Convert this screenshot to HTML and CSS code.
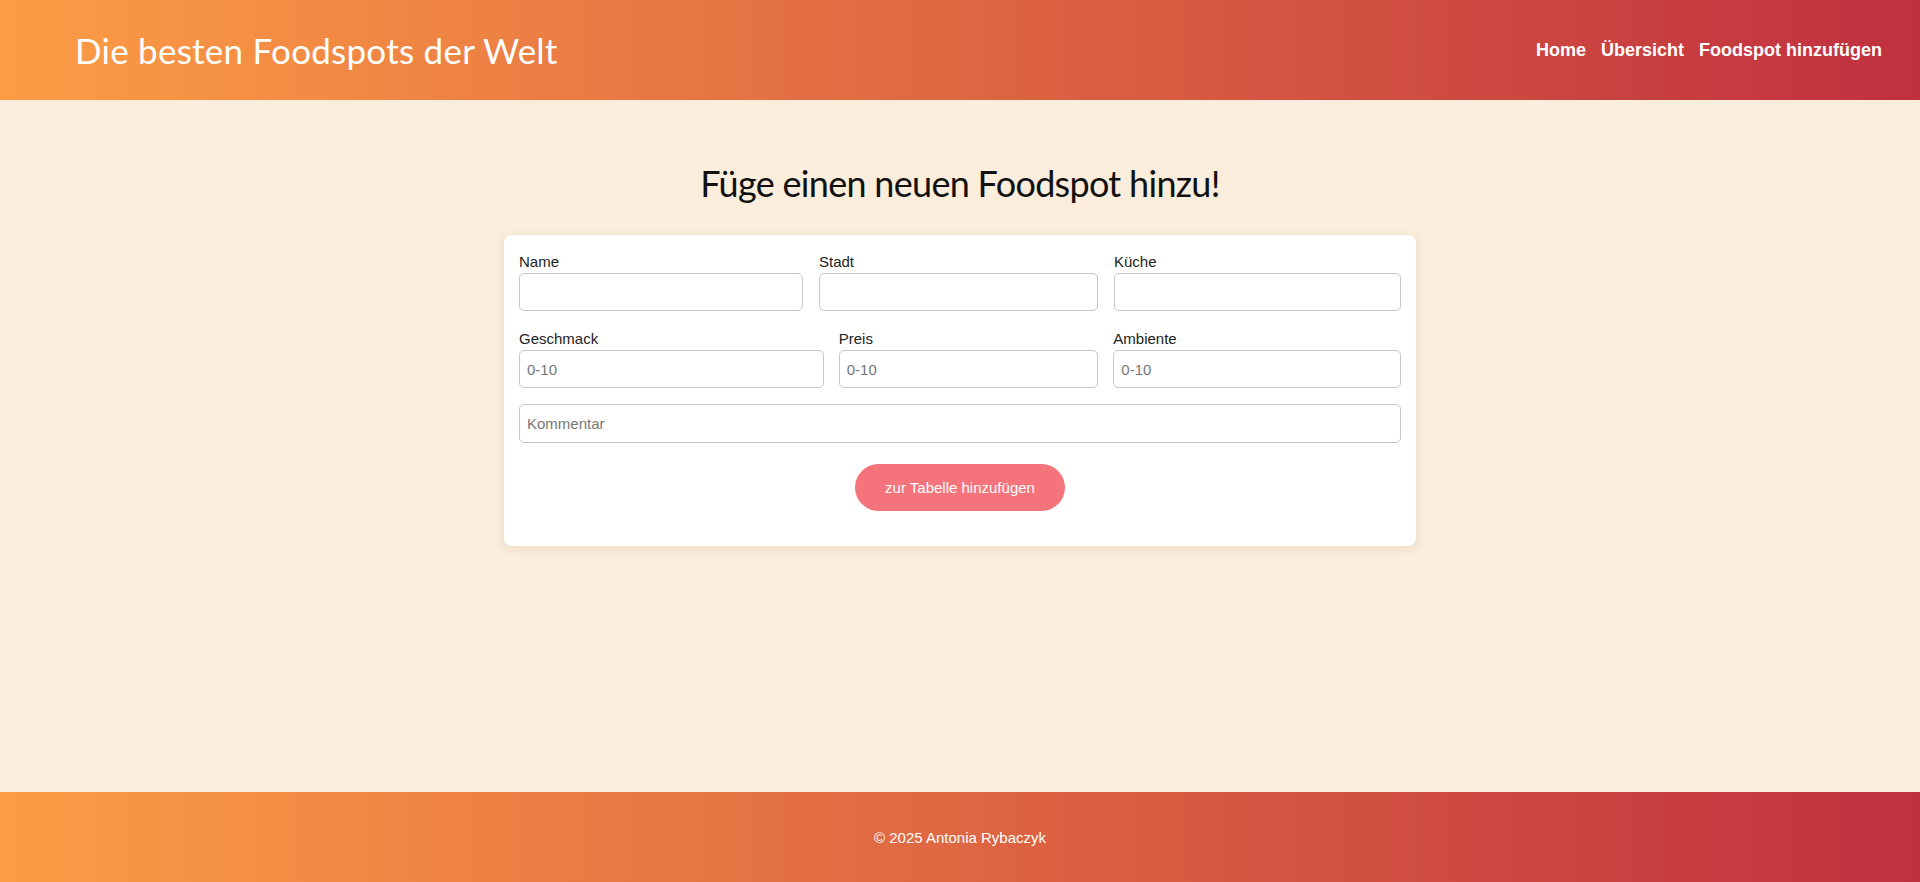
FILE: index.html
```html
<!DOCTYPE html>
<html lang="de">
<head>
<meta charset="utf-8">
<title>Foodspot hinzufügen</title>
<link rel="stylesheet" href="styles.css">
</head>
<body>
<header class="site-header">
  <h1 class="site-title">Die besten Foodspots der Welt</h1>
  <nav class="site-nav">
    <a href="#" class="nav-link">Home</a>
    <a href="#" class="nav-link">Übersicht</a>
    <a href="#" class="nav-link">Foodspot hinzufügen</a>
  </nav>
</header>
<main class="content">
  <h2 class="page-heading">Füge einen neuen Foodspot hinzu!</h2>
  <form class="card">
    <div class="row row-one">
      <div class="field"><label class="field-label">Name</label><input class="field-input" type="text"></div>
      <div class="field"><label class="field-label">Stadt</label><input class="field-input" type="text"></div>
      <div class="field"><label class="field-label">Küche</label><input class="field-input" type="text"></div>
    </div>
    <div class="row row-two">
      <div class="field"><label class="field-label">Geschmack</label><input class="field-input" type="text" placeholder="0-10"></div>
      <div class="field"><label class="field-label">Preis</label><input class="field-input" type="text" placeholder="0-10"></div>
      <div class="field"><label class="field-label">Ambiente</label><input class="field-input" type="text" placeholder="0-10"></div>
    </div>
    <div class="row row-three">
      <input class="field-input comment-input" type="text" placeholder="Kommentar">
    </div>
    <div class="button-row">
      <button type="button" class="submit-button">zur Tabelle hinzufügen</button>
    </div>
  </form>
</main>
<footer class="site-footer">
  <p class="footer-text">© 2025 Antonia Rybaczyk</p>
</footer>
</body>
</html>
```

FILE: styles.css
```css
html, body {
  margin: 0;
  padding: 0;
}

body {
  min-height: 100vh;
  display: flex;
  flex-direction: column;
  background: #faeddc;
  font-family: "Liberation Sans", Arial, sans-serif;
  font-size: 15px;
  color: #222;
}

.site-header {
  height: 100px;
  flex-shrink: 0;
  display: flex;
  align-items: center;
  justify-content: space-between;
  padding: 0 38px 0 75px;
  background: linear-gradient(to right, #fc9d45, #c0303f);
}

.site-title {
  margin: 0;
  font-family: Lato, "Noto Sans", sans-serif;
  font-weight: 400;
  font-size: 35px;
  letter-spacing: 0.25px;
  color: #fff;
}

.site-nav {
  display: flex;
  gap: 15px;
}

.nav-link {
  color: #fff;
  text-decoration: none;
  font-weight: 700;
  font-size: 18px;
}

.content {
  flex: 1;
  padding-top: 61px;
}

.page-heading {
  margin: 0 0 30px;
  text-align: center;
  font-family: Lato, "Noto Sans", sans-serif;
  font-weight: 400;
  font-size: 36px;
  letter-spacing: -0.7px;
  color: #111;
}

.card {
  width: 912px;
  box-sizing: border-box;
  margin: 0 auto;
  padding: 18px 15px 35px;
  background: #fff;
  border-radius: 8px;
  box-shadow: 0 2px 10px rgba(150, 100, 40, 0.15);
}

.row {
  display: grid;
  column-gap: 16px;
}

.row-one {
  grid-template-columns: 284fr 279fr 287fr;
}

.row-two {
  margin-top: 19px;
  column-gap: 15px;
  grid-template-columns: 304fr 259fr 287fr;
}

.row-three {
  margin-top: 16px;
  grid-template-columns: 1fr;
}

.field {
  display: flex;
  flex-direction: column;
}

.field-label {
  display: block;
  font-size: 15px;
  line-height: 17px;
  margin-bottom: 3px;
  color: #222;
}

.field-input {
  box-sizing: border-box;
  width: 100%;
  height: 38px;
  padding: 0 7px;
  border: 1px solid #c8c8c8;
  border-radius: 5px;
  font-family: "Liberation Sans", Arial, sans-serif;
  font-size: 15px;
  color: #222;
  background: #fff;
}

.field-input::placeholder {
  color: #777;
}

.comment-input {
  height: 39px;
}

.button-row {
  margin-top: 21px;
  display: flex;
  justify-content: center;
}

.submit-button {
  border: none;
  border-radius: 24px;
  padding: 15px 30px;
  background: #f5747b;
  color: #fff;
  font-family: "Liberation Sans", Arial, sans-serif;
  font-size: 15px;
  line-height: 17px;
  cursor: pointer;
}

.site-footer {
  height: 90px;
  flex-shrink: 0;
  display: flex;
  align-items: center;
  justify-content: center;
  background: linear-gradient(to right, #fc9d45, #c0303f);
}

.footer-text {
  margin: 0;
  color: #fff;
  font-size: 15px;
}
```
